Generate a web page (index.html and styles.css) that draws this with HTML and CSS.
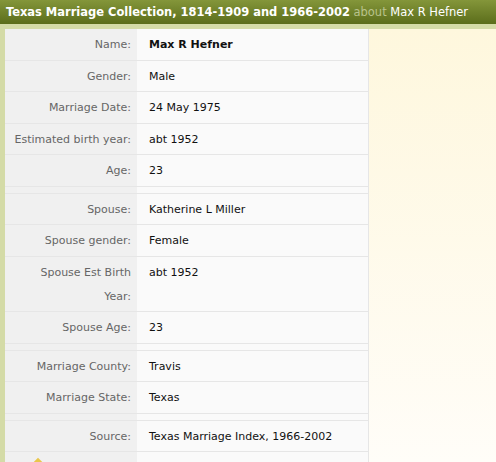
FILE: index.html
```html
<!DOCTYPE html>
<html>
<head>
<meta charset="utf-8">
<link rel="stylesheet" href="styles.css">
</head>
<body>
<div class="header"><span class="title">Texas Marriage Collection, 1814-1909 and 1966-2002</span> <span class="about">about</span> <span class="person">Max R Hefner</span></div>
<div class="strip"></div>
<div class="main">
  <div class="edge"></div>
  <table class="record">
    <tr><td class="lbl">Name:</td><td class="val"><b>Max R Hefner</b></td></tr>
    <tr><td class="lbl">Gender:</td><td class="val">Male</td></tr>
    <tr><td class="lbl">Marriage Date:</td><td class="val">24 May 1975</td></tr>
    <tr><td class="lbl">Estimated birth year:</td><td class="val">abt 1952</td></tr>
    <tr><td class="lbl">Age:</td><td class="val">23</td></tr>
    <tr class="gap"><td class="lbl"></td><td class="val"></td></tr>
    <tr><td class="lbl">Spouse:</td><td class="val">Katherine L Miller</td></tr>
    <tr><td class="lbl">Spouse gender:</td><td class="val">Female</td></tr>
    <tr><td class="lbl">Spouse Est Birth Year:</td><td class="val">abt 1952</td></tr>
    <tr><td class="lbl">Spouse Age:</td><td class="val">23</td></tr>
    <tr class="gap"><td class="lbl"></td><td class="val"></td></tr>
    <tr><td class="lbl">Marriage County:</td><td class="val">Travis</td></tr>
    <tr><td class="lbl">Marriage State:</td><td class="val">Texas</td></tr>
    <tr class="gap"><td class="lbl"></td><td class="val"></td></tr>
    <tr><td class="lbl">Source:</td><td class="val">Texas Marriage Index, 1966-2002</td></tr>
    <tr><td class="lbl"><span class="icon"></span></td><td class="val">&nbsp;</td></tr>
  </table>
  <div class="aside"></div>
</div>
</body>
</html>
```
FILE: styles.css
```css
html, body {
  margin: 0;
  padding: 0;
  overflow: hidden;
  height: 462px;
}
body {
  font-family: "DejaVu Sans", sans-serif;
  font-size: 11px;
  color: #222;
}
.header {
  height: 24px;
  line-height: 24px;
  padding-left: 6px;
  background: linear-gradient(#84963a, #5b6d1b);
  color: #fff;
  white-space: nowrap;
  font-family: "DejaVu Sans Condensed", "DejaVu Sans", sans-serif;
  font-size: 12.75px;
}
.title {
  font-weight: bold;
}
.about {
  color: #b9c38c;
}
.strip {
  height: 5px;
  background: #d4dba7;
}
.main {
  display: flex;
  height: 433px;
}
.edge {
  width: 5px;
  background: #d4dba7;
  flex: none;
}
.record {
  border-collapse: collapse;
  width: 364px;
  flex: none;
  align-self: flex-start;
  border-right: 1px solid #e6e6e6;
}
.record td {
  padding: 4px 0 2.5px;
  line-height: 24px;
  border-bottom: 1px solid #e6e6e6;
  vertical-align: top;
}
.record .lbl {
  width: 120px;
  padding-left: 6px;
  padding-right: 6px;
  text-align: right;
  background: #f0f0f0;
  color: #666;
}
.record .val {
  padding-left: 12px;
  background: #fafafa;
  color: #111;
}
.record .gap td {
  padding: 0;
  height: 6px;
  line-height: 6px;
}
.icon {
  display: inline-block;
  width: 6px;
  height: 6px;
  margin: 3px 90px 0 0;
  background: #e9c64a;
  transform: rotate(45deg);
  vertical-align: top;
}
.aside {
  flex: 1;
  background: linear-gradient(#fef7dd, #fffdf8);
}
```
